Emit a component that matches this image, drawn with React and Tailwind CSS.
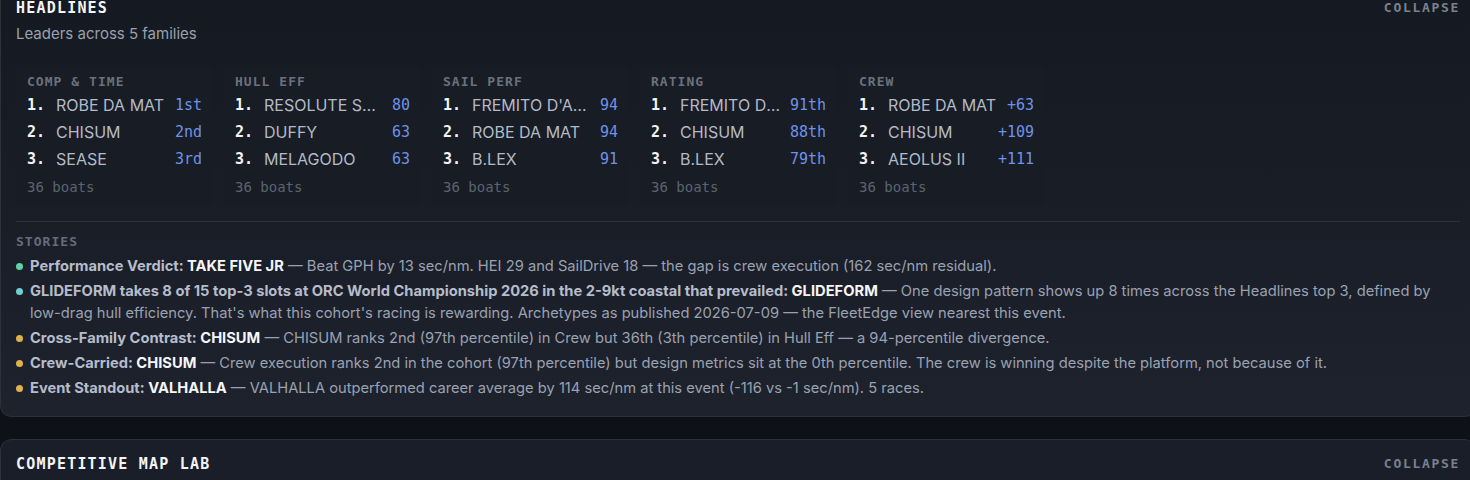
import { useState } from 'react'

const mono = { fontFamily: '"DejaVu Sans Mono", "Liberation Mono", monospace' }
const sans = { fontFamily: 'Inter, "Noto Sans", sans-serif' }

const families = [
  {
    label: 'Comp & Time',
    leaders: [
      ['ROBE DA MAT', '1st'],
      ['CHISUM', '2nd'],
      ['SEASE', '3rd'],
    ],
  },
  {
    label: 'Hull Eff',
    leaders: [
      ['RESOLUTE SPIRIT', '80'],
      ['DUFFY', '63'],
      ['MELAGODO', '63'],
    ],
  },
  {
    label: 'Sail Perf',
    leaders: [
      ["FREMITO D'ARGENTO", '94'],
      ['ROBE DA MAT', '94'],
      ['B.LEX', '91'],
    ],
  },
  {
    label: 'Rating',
    leaders: [
      ["FREMITO D'ARGENTO", '91th'],
      ['CHISUM', '88th'],
      ['B.LEX', '79th'],
    ],
  },
  {
    label: 'Crew',
    leaders: [
      ['ROBE DA MAT', '+63'],
      ['CHISUM', '+109'],
      ['AEOLUS II', '+111'],
    ],
  },
]

const stories = [
  {
    dot: 'bg-[#5fd3a4]',
    label: 'Performance Verdict:',
    boat: 'TAKE FIVE JR',
    body: 'Beat GPH by 13 sec/nm. HEI 29 and SailDrive 18 — the gap is crew execution (162 sec/nm residual).',
  },
  {
    dot: 'bg-[#6fd0d4]',
    label: 'GLIDEFORM takes 8 of 15 top-3 slots at ORC World Championship 2026 in the 2-9kt coastal that prevailed:',
    boat: 'GLIDEFORM',
    body: "One design pattern shows up 8 times across the Headlines top 3, defined by low-drag hull efficiency. That's what this cohort's racing is rewarding. Archetypes as published 2026-07-09 — the FleetEdge view nearest this event.",
  },
  {
    dot: 'bg-[#e2b04c]',
    label: 'Cross-Family Contrast:',
    boat: 'CHISUM',
    body: 'CHISUM ranks 2nd (97th percentile) in Crew but 36th (3th percentile) in Hull Eff — a 94-percentile divergence.',
  },
  {
    dot: 'bg-[#e2b04c]',
    label: 'Crew-Carried:',
    boat: 'CHISUM',
    body: 'Crew execution ranks 2nd in the cohort (97th percentile) but design metrics sit at the 0th percentile. The crew is winning despite the platform, not because of it.',
  },
  {
    dot: 'bg-[#e2b04c]',
    label: 'Event Standout:',
    boat: 'VALHALLA',
    body: 'VALHALLA outperformed career average by 114 sec/nm at this event (-116 vs -1 sec/nm). 5 races.',
  },
]

function CollapseButton({ onClick }) {
  return (
    <button
      onClick={onClick}
      style={mono}
      className="text-[13px] leading-4 font-bold tracking-[0.13em] text-[#7a818e] uppercase"
    >
      Collapse
    </button>
  )
}

function FamilyCard({ family }) {
  return (
    <div className="w-[197px] bg-[#181c25] rounded-sm px-[11px] pt-2 pb-2">
      <div style={mono} className="text-[13px] leading-4 font-semibold tracking-[0.08em] uppercase text-[#6a717e]">
        {family.label}
      </div>
      <div className="mt-[1.5px]">
        {family.leaders.map(([name, value], i) => (
          <div key={name + i} className="flex items-center h-[27px] gap-2">
            <span style={mono} className="w-[21px] shrink-0 text-[15px] font-bold text-[#f1f3f6]">
              {i + 1}.
            </span>
            <span style={sans} className="flex-1 min-w-0 truncate text-[16px] text-[#b3bac7]">
              {name}
            </span>
            <span style={mono} className="shrink-0 text-[15px] text-[#6f92e8]">
              {value}
            </span>
          </div>
        ))}
      </div>
      <div style={mono} className="mt-[4.5px] text-[14px] leading-5 text-[#5d6470]">
        36 boats
      </div>
    </div>
  )
}

export default function App() {
  const [open, setOpen] = useState(true)

  return (
    <div className="min-h-[480px] w-[1470px] overflow-hidden bg-[#0e1117]">
      {/* Headlines panel */}
      <section className="w-[1476px] rounded-b-xl border-b border-l border-[#2c313c] bg-gradient-to-b from-[#151921] to-[#1e222d] pl-[15px] pr-4 pb-[17px]">
        <div className="flex justify-between items-start">
          <div>
            <h2 style={mono} className="text-[15px] leading-4 font-bold tracking-[0.08em] text-[#f3f4f6]">
              HEADLINES
            </h2>
            <p style={sans} className="mt-[8px] text-[15px] leading-5 text-[#9aa1ad]">
              Leaders across 5 families
            </p>
          </div>
          <CollapseButton onClick={() => setOpen(!open)} />
        </div>

        {open && (
          <>
            <div className="mt-[22px] flex gap-[11px]">
              {families.map(f => (
                <FamilyCard key={f.label} family={f} />
              ))}
            </div>

            <div className="mt-4 border-t border-[#2e333e]" />

            <div style={mono} className="mt-3 text-[13px] leading-4 font-semibold tracking-[0.08em] text-[#656c79]">
              STORIES
            </div>
            <ul style={sans} className="mt-[5px] space-y-[3px] text-[14.7px] leading-[22px] pr-6">
              {stories.map((s, i) => (
                <li key={i} className="flex gap-[7px]">
                  <span className={`mt-[7.5px] w-[7px] h-[7px] rounded-full shrink-0 ${s.dot}`} />
                  <p className="text-[#9aa2b2]">
                    <span className="font-bold text-[#b5bccb]">{s.label} </span>
                    <span className="font-bold text-[#f5f6f8]">{s.boat}</span>
                    {' — '}
                    {s.body}
                  </p>
                </li>
              ))}
            </ul>
          </>
        )}
      </section>

      {/* Competitive map lab panel */}
      <section className="mt-[22px] w-[1476px] h-[60px] rounded-t-xl border-t border-l border-[#2c313c] bg-[#1a1e28] pl-[15px] pr-4 pt-[16px]">
        <div className="flex justify-between items-center">
          <h2 style={mono} className="text-[15px] leading-4 font-bold tracking-[0.08em] text-[#f3f4f6]">
            COMPETITIVE MAP LAB
          </h2>
          <CollapseButton />
        </div>
      </section>
    </div>
  )
}
